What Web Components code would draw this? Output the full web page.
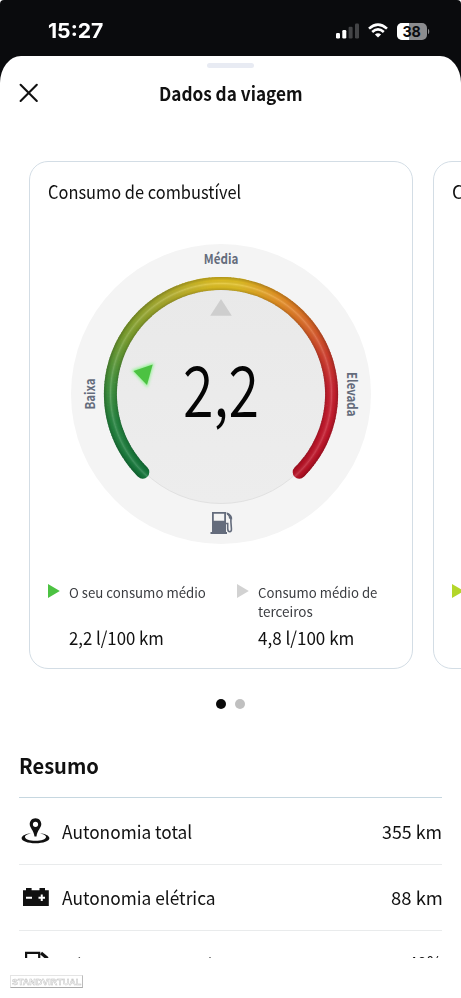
<!DOCTYPE html>
<html lang="pt">
<head>
<meta charset="utf-8">
<title>Dados da viagem</title>
<style>
html,body{margin:0;background:#fff}
body{width:461px;height:998px;overflow:hidden;font-family:"Noto Sans CJK JP","Noto Sans",sans-serif;color:#111}
</style>
</head>
<body>
<trip-app></trip-app>
<script>
const define = (name, html, ready) => {
  const t = document.createElement('template');
  t.innerHTML = html;
  customElements.define(name, class extends HTMLElement {
    constructor() {
      super();
      this.attachShadow({mode: 'open'}).append(t.content.cloneNode(true));
    }
    connectedCallback() { if (ready) ready.call(this, this.shadowRoot); }
  });
};

/* One line of text whose glyphs are stretched to the width in the "w" attribute. */
define('fit-text', `
<style>
:host{display:block;white-space:nowrap;line-height:24px}
span{display:inline-block;transform-origin:0 50%;vertical-align:top}
</style><span><slot></slot></span>`, function (root) {
  const w = +this.getAttribute('w');
  this.style.width = w + 'px';
  const s = root.querySelector('span');
  s.style.transform = `scaleX(${w / s.offsetWidth})`;
});

define('status-bar', `
<style>
:host{display:flex;justify-content:space-between;align-items:center;height:56px;box-sizing:border-box;padding:6px 31px 0 48px;background:#0a0b0d;color:#fff;border-radius:4px 4px 0 0}
fit-text{font:700 20.4px/24px Inter,sans-serif}
.right{display:flex;gap:9px;align-items:center}
svg{display:block}
</style>
<fit-text w="55">15:27</fit-text>
<div class="right">
<svg width="23" height="16" viewBox="0 0 23 16"><rect x="0" y="10" width="4" height="5.4" rx="1.2" fill="#fff"/><rect x="6.3" y="7" width="4" height="8.4" rx="1.2" fill="#fff"/><rect x="12.6" y="3.8" width="4" height="11.6" rx="1.2" fill="#434446"/><rect x="19" y="0.6" width="4" height="14.8" rx="1.2" fill="#434446"/></svg>
<svg width="20" height="16" viewBox="0 0 20 16" fill="none" stroke="#fff" stroke-width="2.6"><path d="M1 5.6Q10-2.4 19 5.6"/><path d="M4.2 9Q10 3.9 15.8 9"/><path d="M6.9 11.4Q10 9 13.1 11.4L10 14.6Z" fill="#fff" stroke="none"/></svg>
<svg width="33" height="17" viewBox="0 0 33 17"><defs><clipPath id="b"><rect width="30" height="17" rx="5"/></clipPath></defs><g clip-path="url(#b)"><rect width="30" height="17" fill="#8b8c8e"/><rect width="12" height="17" fill="#fff"/></g><path d="M31 6c1.7.3 1.7 4.7 0 5z" fill="#8b8c8e"/><text x="5.4" y="13.9" textLength="18.5" lengthAdjust="spacingAndGlyphs" font-family="Inter,sans-serif" font-weight="700" font-size="15" fill="#0a0b0d">38</text></svg>
</div>`);

define('sheet-header', `
<style>
:host{display:block;padding-top:7px}
.handle{width:47px;height:5px;border-radius:3px;background:#e8ebf3;margin:0 auto}
.row{display:grid;grid-template-columns:1fr auto 1fr;align-items:center;height:49px;padding:0 19px}
fit-text{font-size:18.4px;font-weight:700}
svg{display:block}
</style>
<div class="handle"></div>
<div class="row">
<svg width="20" height="20" viewBox="0 0 20 20" stroke="#111" stroke-width="2.1" stroke-linecap="round"><path d="M1.6 1.8L17.8 18M17.8 1.8L1.6 18"/></svg>
<fit-text w="144">Dados da viagem</fit-text><span></span></div>`);

define('consumption-gauge', `
<style>
:host{display:block;width:300px;height:300px}
svg{display:block}
text{font-weight:700;font-size:13.6px;fill:#646c7c}
</style>
<svg width="300" height="300" viewBox="-150 -150 300 300">
<defs>
<linearGradient id="face" x1="0" y1="0" x2="0" y2="1"><stop offset="0" stop-color="#e9e9e9"/><stop offset="1" stop-color="#ededed"/></linearGradient>
<radialGradient id="tube" gradientUnits="userSpaceOnUse" cx="0" cy="0" r="117"><stop offset=".887" stop-color="#000" stop-opacity=".22"/><stop offset=".915" stop-color="#000" stop-opacity=".05"/><stop offset=".945" stop-color="#fff" stop-opacity=".17"/><stop offset=".97" stop-color="#000" stop-opacity=".04"/><stop offset="1" stop-color="#000" stop-opacity=".24"/></radialGradient>
<filter id="soft" x="-50%" y="-50%" width="200%" height="200%"><feGaussianBlur stdDeviation="1.5"/></filter>
</defs>
<circle r="150" fill="#f4f4f4"/>
<circle r="109.5" fill="url(#face)" stroke="#e1e1e1" stroke-width="1"/>
<g id="arc" fill="none" stroke-width="13"></g>
<path d="M-78.2 78.2A110.6 110.6 0 1 1 78.2 78.2" fill="none" stroke="url(#tube)" stroke-width="13" stroke-linecap="round"/>
<path d="M0-95L10.8-78.3H-10.8Z" fill="#cecece"/>
<path d="M-88-23.5L-68-30L-74-8Z" fill="#7cf57c" stroke="#7cf57c" stroke-width="1.5" filter="url(#soft)" opacity=".8"/>
<path d="M-87.5-23L-68.3-29.6L-74-9Z" fill="#4cc242"/>
<text x="-17.2" y="-129.8" textLength="34.5" lengthAdjust="spacingAndGlyphs">Média</text>
<text transform="translate(-126 15.5) rotate(-90)" textLength="31" lengthAdjust="spacingAndGlyphs">Baixa</text>
<text transform="translate(126 -22) rotate(90)" textLength="44.5" lengthAdjust="spacingAndGlyphs">Elevada</text>
<text x="-38" y="23" textLength="76" lengthAdjust="spacingAndGlyphs" style="font-size:70px;font-weight:350;fill:#050505">2,2</text>
<g fill="#646c7c"><path d="M-9 118H5V138H6V140H-10.5V138H-9ZM-7.2 119.8V126.7H3.2V119.8Z" fill-rule="evenodd"/><path d="M5 129.5H6.7V134.5Q6.7 137.7 8.7 137.7Q10.7 137.7 10.4 134.5L9.9 128V124.4Q9.8 122.3 6.2 119.7" fill="none" stroke="#646c7c" stroke-width="1.6"/><path d="M5.6 118.3Q11.8 120.5 11.2 125.5L8 124.5Q8 121.5 5.6 119.8Z"/></g>
</svg>`, function (root) {
  const stops = [[-135,21,120,60],[-105,38,134,64],[-85,68,148,62],[-60,122,160,46],[-30,174,172,44],[-5,224,192,34],[8,226,192,36],[30,232,148,36],[50,222,106,40],[68,210,64,44],[85,202,34,48],[110,198,24,44],[135,186,18,38]];
  const colour = a => {
    let i = 1;
    while (i < stops.length - 1 && stops[i][0] < a) i++;
    const p = stops[i - 1], q = stops[i], k = (a - p[0]) / (q[0] - p[0]);
    return `rgb(${[1,2,3].map(n => Math.round(p[n] + (q[n] - p[n]) * k))})`;
  };
  const R = 110.6, pt = a => [R * Math.sin(a * Math.PI / 180), -R * Math.cos(a * Math.PI / 180)].map(v => v.toFixed(2)).join(' ');
  const g = root.getElementById('arc');
  const add = (a, b, cap) => {
    const p = document.createElementNS('http://www.w3.org/2000/svg', 'path');
    p.setAttribute('d', `M${pt(a)}A${R} ${R} 0 0 1 ${pt(b)}`);
    p.setAttribute('stroke', colour(a));
    if (cap) p.setAttribute('stroke-linecap', 'round');
    g.append(p);
  };
  add(-135, -134, true); add(134, 135, true);
  for (let a = -135; a < 135; a += 1.5) add(a, Math.min(135, a + 1.9));
});

define('legend-item', `
<style>
:host{display:grid;grid-template-columns:21px 1fr;color:#3a3c40}
svg{display:block;margin-top:1.5px}
.label{height:42px;padding-top:1px;font-size:13.4px}
::slotted(fit-text[slot=label]){line-height:18.7px!important}
.value{font-size:18px;color:#111}
</style>
<svg width="12" height="15" viewBox="0 0 12 15"><path d="M0 0L11.8 7L0 14Z" fill="var(--mark)"/></svg>
<div><div class="label"><slot name="label"></slot></div><div class="value"><slot name="value"></slot></div></div>`);

define('trip-card', `
<style>
:host{display:block;box-sizing:border-box;flex:none;width:384px;height:508px;border:1px solid #d3dde5;border-radius:19px;padding:16px 18px 0 17.5px}
.title{height:66px;font-size:18.4px}
.gauge{display:flex;justify-content:center;height:300px}
.legend{display:grid;grid-template-columns:189px 1fr;margin-top:38px}
</style>
<div class="title"><slot name="title"></slot></div>
<div class="gauge"><slot></slot></div>
<div class="legend"><slot name="legend"></slot></div>`);

define('page-dots', `
<style>
:host{display:flex;justify-content:center;gap:9px;margin-top:30px}
i{width:10px;height:10px;border-radius:50%;background:#c0c0c0}
i.on{background:#0a0a0a}
</style><i class="on"></i><i></i>`);

define('summary-row', `
<style>
:host{display:flex;align-items:center;flex:none;box-sizing:border-box;height:66px;border-bottom:1px solid #e9ebec;font-size:18.3px}
.icon{width:42.5px;padding-left:2px;box-sizing:border-box}
.grow{flex:1}
</style><div class="icon"><slot name="icon"></slot></div><div class="grow"><slot></slot></div><slot name="value"></slot>`);

define('trip-summary', `
<style>
:host{display:block;margin:40px 19px 0}
.head{height:48px;font-size:20.6px;font-weight:700;border-bottom:1px solid #c6d7e0}
.list{display:flex;flex-direction:column;height:160px;overflow:hidden}
svg{display:block}
summary-row:first-child{height:67px;padding-bottom:1px}
summary-row:nth-child(2){padding-bottom:2px}
summary-row:nth-child(3) fit-text{padding-top:2px}
summary-row:nth-child(3) fit-text[slot=value]{padding:0 0 3px}
.head fit-text{line-height:32px}
</style>
<div class="head"><fit-text w="80">Resumo</fit-text></div>
<div class="list">
<summary-row><svg slot="icon" width="29" height="26" viewBox="0 0 29 26"><path d="M14.5.2C10.8.2 8.7 3 8.7 6.1C8.7 10 12.8 12.4 13.5 18.5H15.5C16.2 12.4 20.3 10 20.3 6.1C20.3 3 18.2.2 14.5.2ZM14.5 3.7A2.6 2.6 0 1 1 14.5 8.9A2.6 2.6 0 1 1 14.5 3.7Z" fill="#111" fill-rule="evenodd"/><path d="M10.8 15.3C5 15.7.6 17.7.6 20.2C.6 23 6.8 25.2 14.5 25.2S28.4 23 28.4 20.2C28.4 17.7 24 15.7 18.2 15.3C22.2 16 25 17.4 25 19C25 21.3 20.4 22.8 14.5 22.8S4 21.3 4 19C4 17.4 6.8 16 10.8 15.3Z" fill="#111"/></svg><fit-text w="130.5">Autonomia total</fit-text><fit-text slot="value" w="60.5">355 km</fit-text></summary-row>
<summary-row><svg slot="icon" width="29" height="20" viewBox="0 0 29 20"><path d="M2 3.3H5V1H10.6V3.3H18.5V1H24V3.3H27.8V19H2Z" fill="#111"/><path d="M5 10.8H11M17.5 10.8H24M20.75 7.6V14" stroke="#fff" stroke-width="2"/></svg><fit-text w="153.5">Autonomia elétrica</fit-text><fit-text slot="value" w="51.5">88 km</fit-text></summary-row>
<summary-row><svg slot="icon" width="29" height="26" viewBox="0 0 29 26" fill="none" stroke="#111" stroke-width="2.2"><path d="M5.1 25V1.8H18.2V25M2.5 25H21"/><path d="M20 2L26.5 7.5" stroke-width="3.2"/><path d="M26.3 7V20Q23 25 22 18V13H18"/></svg><fit-text w="173">Nível de combustível</fit-text><fit-text slot="value" w="34">48%</fit-text></summary-row>
</div>`);

define('plate-mark', `
<style>
:host{display:flex;align-items:center;justify-content:center;box-sizing:border-box;width:73px;height:13px;margin:17px 0 0 10px;background:#fff;border:1px solid #e4e4e4;border-right-color:#bbb;border-bottom-color:#aaa}
fit-text{font:700 9.5px/11px "Liberation Sans",sans-serif;color:#fff;-webkit-text-stroke:.5px #bdbdbd}
</style><fit-text w="69">STANDVIRTUAL</fit-text>`);

define('trip-app', `
<style>
:host{display:block;width:461px;height:998px;overflow:hidden}
.back{background:#0a0b0d}
.sheet{background:#fff;border-radius:21px 21px 0 0 / 27px 27px 0 0;height:942px;overflow:hidden}
.cards{display:flex;gap:20px;margin:44px 0 0 29px}
fit-text[slot=title]{line-height:27px}
</style>
<status-bar></status-bar>
<div class="back"><div class="sheet">
<sheet-header></sheet-header>
<div class="cards">
<trip-card>
<fit-text slot="title" w="193.5">Consumo de combustível</fit-text>
<consumption-gauge></consumption-gauge>
<legend-item slot="legend" style="--mark:#4cc242"><fit-text slot="label" w="136.5">O seu consumo médio</fit-text><fit-text slot="value" w="95">2,2 l/100 km</fit-text></legend-item>
<legend-item slot="legend" style="--mark:#d2d2d2"><fit-text slot="label" w="119">Consumo médio de</fit-text><fit-text slot="label" w="54.5">terceiros</fit-text><fit-text slot="value" w="96.5">4,8 l/100 km</fit-text></legend-item>
</trip-card>
<trip-card>
<fit-text slot="title" w="150">Consumo elétrico</fit-text>
<div style="height:300px"></div>
<legend-item slot="legend" style="--mark:#b4d62a"></legend-item>
</trip-card>
</div>
<page-dots></page-dots>
<trip-summary></trip-summary>
<plate-mark></plate-mark>
</div></div>`);
</script>
</body>
</html>
